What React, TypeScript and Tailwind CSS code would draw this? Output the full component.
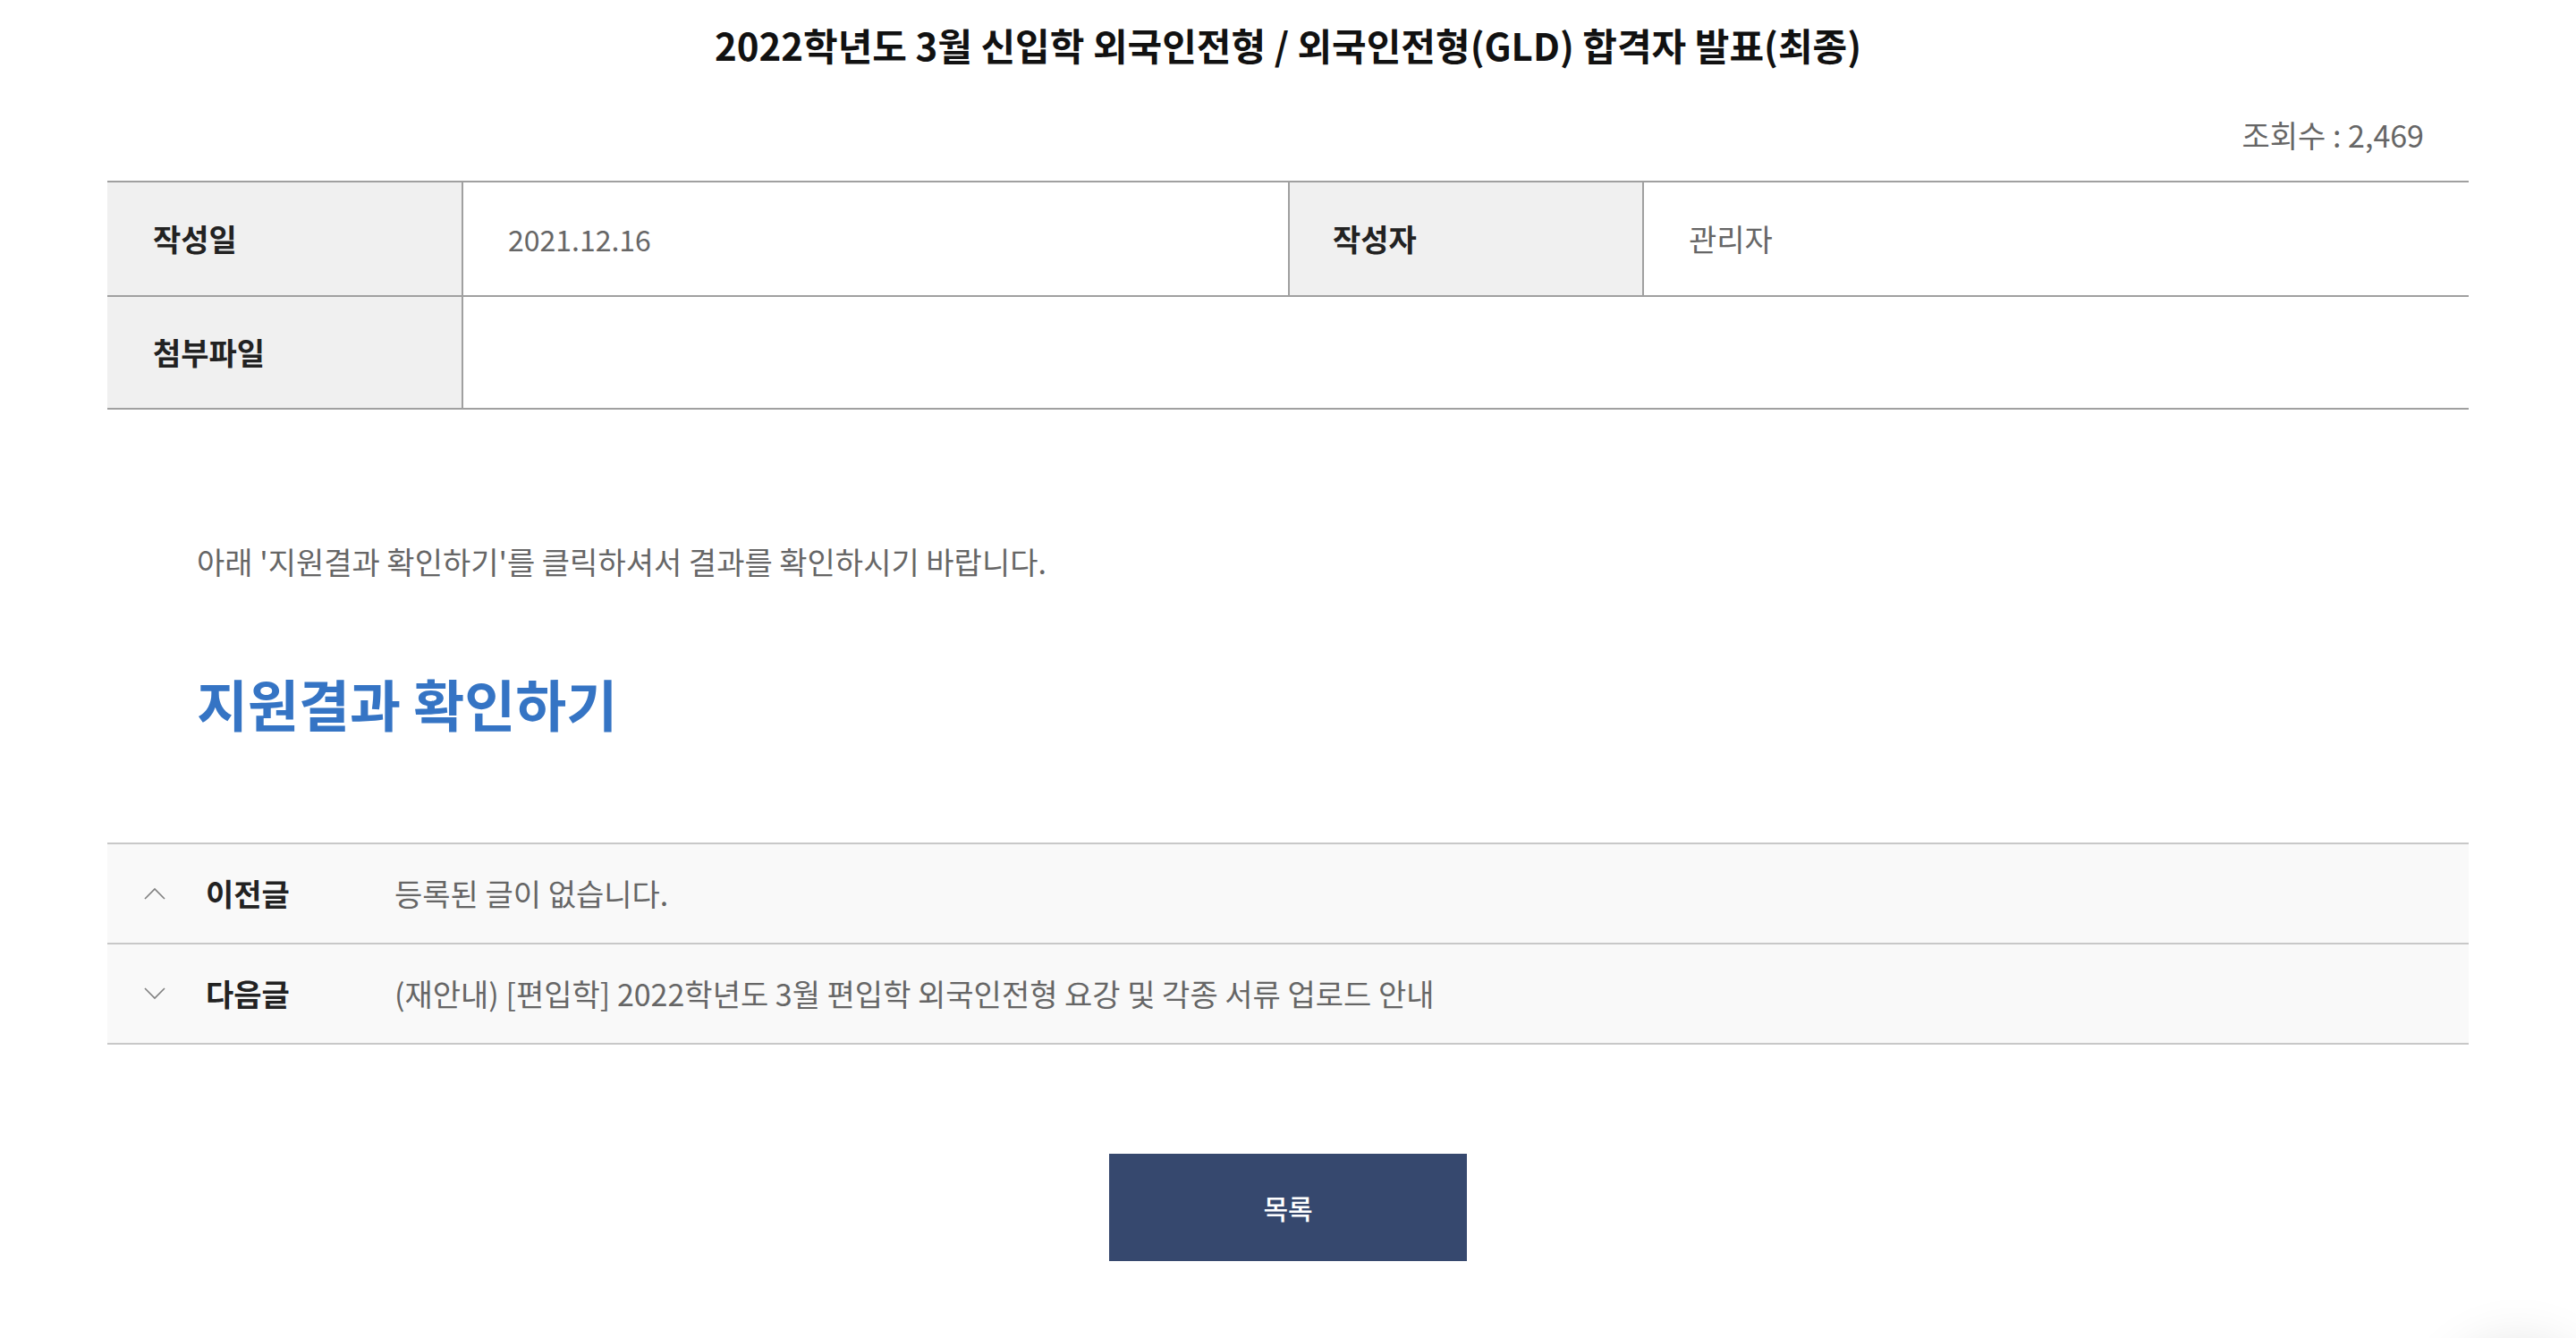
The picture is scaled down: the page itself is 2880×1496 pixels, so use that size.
// Post detail view: title, meta table, body, prev/next navigation, list button
const meta = {
  title: '2022학년도 3월 신입학 외국인전형 / 외국인전형(GLD) 합격자 발표(최종)',
  views: '2,469',
  date: '2021.12.16',
  author: '관리자',
}

const neighbours = [
  { dir: 'up', label: '이전글', text: '등록된 글이 없습니다.' },
  {
    dir: 'down',
    label: '다음글',
    text: '(재안내) [편입학] 2022학년도 3월 편입학 외국인전형 요강 및 각종 서류 업로드 안내',
  },
]

function LabelCell({ children, className = '' }: { children: React.ReactNode; className?: string }) {
  return (
    <div className={`flex items-center bg-[#f0f0f0] text-[34px] font-bold text-[#222] ${className}`}>
      {children}
    </div>
  )
}

function ValueCell({ children, small }: { children?: React.ReactNode; small?: boolean }) {
  return (
    <div
      className={`flex items-center border-l-2 border-[#a0a0a0] pl-[50px] text-[#666] ${
        small ? 'text-[32px]' : 'text-[34px]'
      }`}
    >
      {children}
    </div>
  )
}

function Chevron({ up }: { up: boolean }) {
  return (
    <svg width="24" height="14" viewBox="0 0 24 14" fill="none" stroke="#808080" strokeWidth="1.6">
      {up ? <polyline points="1,13 12,2 23,13" /> : <polyline points="1,1 12,12 23,1" />}
    </svg>
  )
}

export default function App() {
  return (
    <div className="relative min-h-screen overflow-hidden bg-white font-['Noto_Sans_CJK_KR',sans-serif] leading-none">
      <div className="mx-auto w-[2640px]">
        <h1 className="flex h-[100px] items-center justify-center text-[42px] font-bold text-[#111]">
          {meta.title}
        </h1>

        <div className="flex h-[102px] items-center justify-end pr-[50px] text-[34px] text-[#666]">
          조회수 : {meta.views}
        </div>

        {/* meta table */}
        <div className="border-t-2 border-[#a0a0a0]">
          <div className="grid h-[128px] grid-cols-[396px_924px_396px_924px] border-b-2 border-[#a0a0a0]">
            <LabelCell className="pl-[51px]">작성일</LabelCell>
            <ValueCell small>{meta.date}</ValueCell>
            <LabelCell className="border-l-2 border-[#a0a0a0] pl-[48px]">작성자</LabelCell>
            <ValueCell>{meta.author}</ValueCell>
          </div>
          <div className="grid h-[126px] grid-cols-[396px_1fr] border-b-2 border-[#a0a0a0]">
            <LabelCell className="pl-[51px]">첨부파일</LabelCell>
            <ValueCell />
          </div>
        </div>

        {/* body */}
        <div className="px-[100px] pt-[146px] pb-[116px]">
          <p className="h-[48px] leading-[48px] text-[34px] text-[#666]">
            아래 &apos;지원결과 확인하기&apos;를 클릭하셔서 결과를 확인하시기 바랍니다.
          </p>
          <a
            href="#"
            className="mt-[94px] block h-[80px] leading-[80px] text-[62px] font-bold text-[#3574c4]"
          >
            지원결과 확인하기
          </a>
        </div>

        {/* prev / next */}
        <div className="border-t-2 border-[#c8c8c8]">
          {neighbours.map((n) => (
            <div
              key={n.label}
              className="flex h-[112px] items-center border-b-2 border-[#c8c8c8] bg-[#f9f9f9] pl-[41px]"
            >
              <span className="flex w-[69px] items-center">
                <Chevron up={n.dir === 'up'} />
              </span>
              <span className="w-[211px] text-[34px] font-bold text-[#222]">{n.label}</span>
              <span className="text-[34px] text-[#666]">{n.text}</span>
            </div>
          ))}
        </div>

        <div className="flex justify-center pt-[122px]">
          <button className="h-[120px] w-[400px] bg-[#36486e] text-[30px] font-medium text-white">
            목록
          </button>
        </div>
      </div>

      {/* floating button just below the fold, only its shadow shows */}
      <div className="fixed right-[-20px] bottom-[-176px] h-[170px] w-[170px] rounded-full bg-white shadow-[0_0_60px_rgba(0,0,0,0.12)]" />
    </div>
  )
}
